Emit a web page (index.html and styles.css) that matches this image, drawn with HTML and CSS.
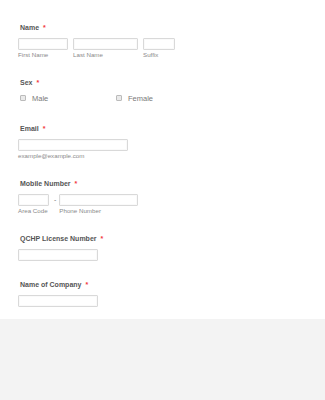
FILE: index.html
```html
<!DOCTYPE html>
<html lang="en">
<head>
  <meta charset="UTF-8">
  <meta name="viewport" content="width=device-width, initial-scale=1.0">
  <title>Registration Form</title>
  <link rel="stylesheet" href="styles.css">
</head>
<body>
  <form class="form-sheet">
    <!-- Name -->
    <div class="form-line">
      <label class="form-label">Name <span class="req">*</span></label>
      <div class="input-row">
        <div class="field">
          <input class="form-input w-first" type="text">
          <span class="sublabel">First Name</span>
        </div>
        <div class="field">
          <input class="form-input w-last" type="text">
          <span class="sublabel">Last Name</span>
        </div>
        <div class="field">
          <input class="form-input w-suffix" type="text">
          <span class="sublabel">Suffix</span>
        </div>
      </div>
    </div>

    <!-- Sex -->
    <div class="form-line line-sex">
      <label class="form-label">Sex <span class="req">*</span></label>
      <div class="check-row">
        <label class="check-item"><span class="check-box"></span>Male</label>
        <label class="check-item"><span class="check-box"></span>Female</label>
      </div>
    </div>

    <!-- Email -->
    <div class="form-line">
      <label class="form-label">Email <span class="req">*</span></label>
      <div class="field">
        <input class="form-input w-email" type="text">
        <span class="sublabel">example@example.com</span>
      </div>
    </div>

    <!-- Mobile -->
    <div class="form-line">
      <label class="form-label">Mobile Number <span class="req">*</span></label>
      <div class="input-row">
        <div class="field">
          <input class="form-input w-area" type="text">
          <span class="sublabel">Area Code</span>
        </div>
        <span class="dash">-</span>
        <div class="field">
          <input class="form-input w-phone" type="text">
          <span class="sublabel">Phone Number</span>
        </div>
      </div>
    </div>

    <!-- QCHP -->
    <div class="form-line">
      <label class="form-label">QCHP License Number <span class="req">*</span></label>
      <input class="form-input w-short" type="text">
    </div>

    <!-- Company -->
    <div class="form-line line-last">
      <label class="form-label">Name of Company <span class="req">*</span></label>
      <input class="form-input w-short" type="text">
    </div>
  </form>
</body>
</html>
```

FILE: styles.css
```css
html, body {
  margin: 0;
  height: 100%;
}
body {
  background: #f3f3f3;
  font-family: "Liberation Sans", Arial, sans-serif;
  overflow: hidden;
}
.form-sheet {
  background: #fff;
  padding: 23px 0 12px 18px;
}
.form-line {
  margin-bottom: 19px;
}
.form-line.line-last {
  margin-bottom: 0;
}
.form-label {
  display: block;
  height: 10px;
  line-height: 10px;
  padding-left: 2px;
  margin-bottom: 5px;
  font-size: 7px;
  font-weight: bold;
  color: #555;
}
.req {
  color: #f23a3c;
  margin-left: 2px;
}
.input-row {
  display: flex;
  gap: 5px;
}
.field {
  display: flex;
  flex-direction: column;
}
.form-input {
  box-sizing: border-box;
  display: block;
  height: 12px;
  margin: 0;
  padding: 0;
  border: 1px solid #d9d9d9;
  border-radius: 1px;
  background: #fff;
  box-shadow: inset 0 0 0 1px #fafafa;
}
.w-first { width: 50px; }
.w-last { width: 65px; }
.w-suffix { width: 32px; }
.w-email { width: 110px; }
.w-area { width: 31px; }
.w-phone { width: 79px; }
.w-short { width: 80px; }
.sublabel {
  height: 9px;
  line-height: 9px;
  font-size: 6.2px;
  color: #8a8a8a;
  white-space: nowrap;
}
.dash {
  font-size: 7px;
  color: #777;
  line-height: 12px;
  margin-right: -2px;
}
.line-sex {
  margin-bottom: 20px;
}
.line-sex .form-label {
  margin-bottom: 4px;
}
.check-row {
  display: flex;
  height: 12px;
  align-items: center;
  padding-left: 2px;
}
.check-item {
  display: flex;
  align-items: center;
  width: 96px;
  font-size: 7.5px;
  color: #7a7a7a;
}
.check-box {
  box-sizing: border-box;
  width: 6px;
  height: 6px;
  margin-right: 6px;
  border: 1px solid #bbb;
  background: #eaeaea;
  border-radius: 1px;
}
```
